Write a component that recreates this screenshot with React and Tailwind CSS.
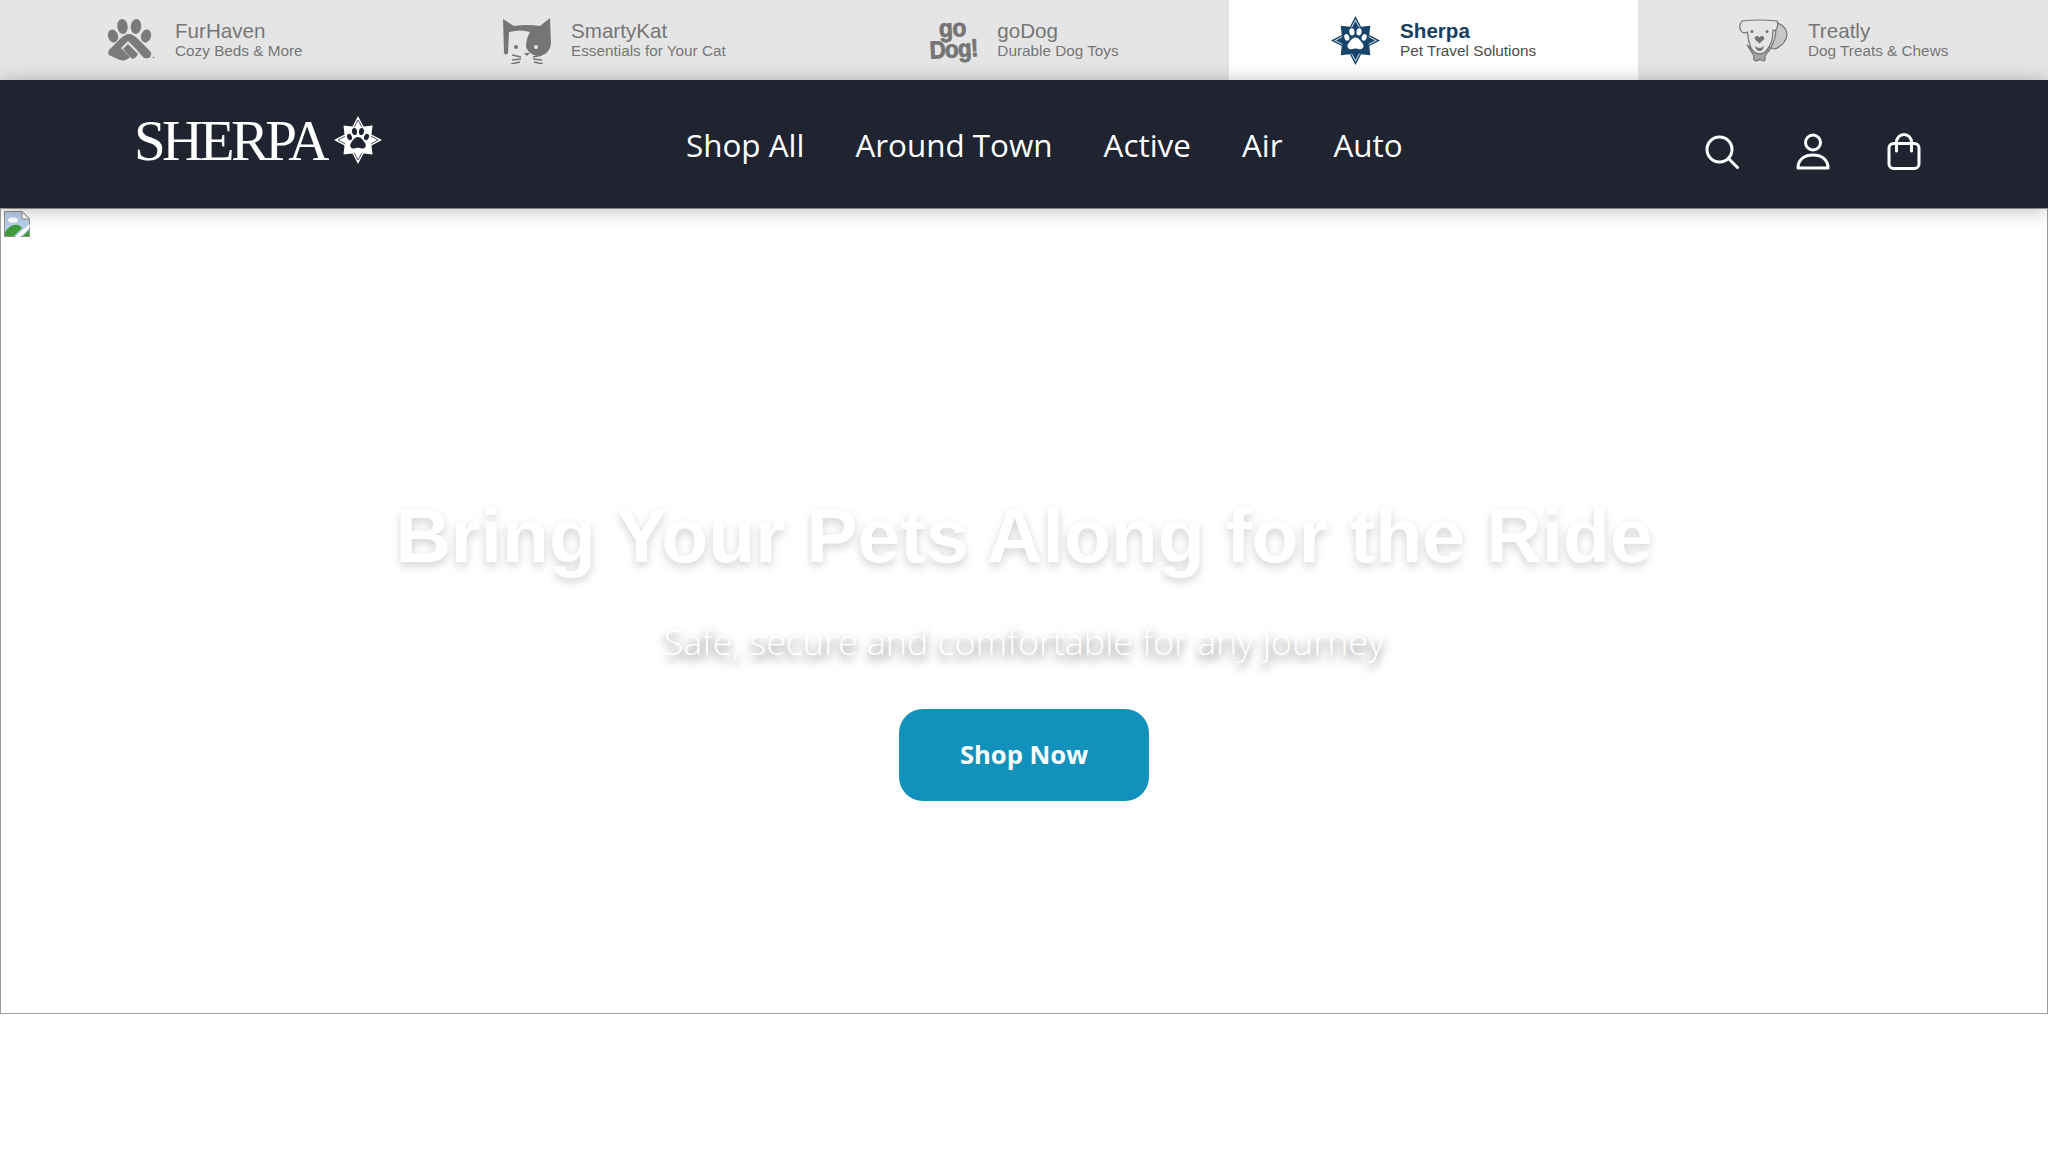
const brands = [
  { name: 'FurHaven', tagline: 'Cozy Beds & More', Icon: PawLogo },
  { name: 'SmartyKat', tagline: 'Essentials for Your Cat', Icon: CatLogo },
  { name: 'goDog', tagline: 'Durable Dog Toys', Icon: GoDogLogo },
  { name: 'Sherpa', tagline: 'Pet Travel Solutions', Icon: SherpaTabLogo, active: true },
  { name: 'Treatly', tagline: 'Dog Treats & Chews', Icon: DogLogo },
];

const links = ['Shop All', 'Around Town', 'Active', 'Air', 'Auto'];

function PawLogo() {
  return (
    <svg width="48" height="42" viewBox="0 0 48 42" className="text-[#7a7a7a]" fill="currentColor">
      <ellipse cx="6" cy="17" rx="5" ry="6.5" transform="rotate(-18 6 17)" />
      <ellipse cx="15.5" cy="7.5" rx="5.2" ry="7.5" transform="rotate(-6 15.5 7.5)" />
      <ellipse cx="29" cy="7.5" rx="5.2" ry="7.5" transform="rotate(6 29 7.5)" />
      <ellipse cx="39" cy="17" rx="5" ry="6.5" transform="rotate(18 39 17)" />
      <path d="M22 15 C19 15 16 17 13 20 L3 30 C0 33 1 36 4 37 L13 41 C17 42 20 41 23 38 L14 29 L21 22 L29 30 L36 38 C38 40 44 40 44 36 C45 34 43 32 41 30 L31 20 C28 17 25 15 22 15 Z" />
      <path d="M21 25 L31 35 C29 39 26 41 24 39 L16 30 Z" />
      <circle cx="46.5" cy="38.5" r="0.8" />
    </svg>
  );
}

function CatLogo() {
  return (
    <svg width="48" height="47" viewBox="0 0 48 47" className="text-[#757575]" fill="currentColor">
      <path d="M0 2 L11 9 Q24 7 37 9 L47 1 L48 26 Q47 38 35 39 Q26 38 23 30 Q23 22 27 15 Q18 12 6 15 L5 36 Q3 39 1 36 Z" />
      <circle cx="13" cy="30" r="2" />
      <circle cx="33" cy="30" r="2" className="text-[#e5e5e5]" fill="currentColor" />
      <path d="M21 36 L27 36 L24 39 Z" />
      <path d="M9 38 L18 40 M9 43 L18 42 M8 47 L17 45 M30 40 L39 38 M30 42 L39 43 M31 45 L40 47" stroke="currentColor" strokeWidth="1.5" fill="none" />
    </svg>
  );
}

function GoDogLogo() {
  return (
    <div className="flex w-[48px] -rotate-3 scale-y-110 flex-col items-center font-['Liberation_Sans',sans-serif] font-bold text-[#757575] [-webkit-text-stroke:0.7px_#757575]">
      <span className="text-[23px] leading-[15px] tracking-[-0.5px]">go</span>
      <span className="mt-[2px] text-[22.5px] leading-[20px] tracking-[-0.8px]">Dog!</span>
    </div>
  );
}

function SherpaStar({ size, color, paw }) {
  return (
    <svg width={size} height={size} viewBox="0 0 48 48">
      <path fill={color} d="M24 0 L29.5 10.5 L38.5 9.5 L37.5 18.5 L48 24 L37.5 29.5 L38.5 38.5 L29.5 37.5 L24 48 L18.5 37.5 L9.5 38.5 L10.5 29.5 L0 24 L10.5 18.5 L9.5 9.5 L18.5 10.5 Z" />
      <path fill="none" stroke={paw} strokeWidth="1" d="M24 4 L17 17 L4 24 L17 31 L24 44 L31 31 L44 24 L31 17 Z" opacity="0.75" />
      <circle cx="24" cy="24" r="13.5" fill={color} />
      <g fill={paw}>
        <ellipse cx="15.5" cy="21" rx="2.4" ry="3.3" transform="rotate(-20 15.5 21)" />
        <ellipse cx="20.5" cy="15.5" rx="2.5" ry="3.6" transform="rotate(-8 20.5 15.5)" />
        <ellipse cx="27.5" cy="15.5" rx="2.5" ry="3.6" transform="rotate(8 27.5 15.5)" />
        <ellipse cx="32.5" cy="21" rx="2.4" ry="3.3" transform="rotate(20 32.5 21)" />
        <path d="M24 21 C27 21 29 24 31 27 C33 30 31 33 28 32.5 C26 32 25 31.8 24 31.8 C23 31.8 22 32 20 32.5 C17 33 15 30 17 27 C19 24 21 21 24 21 Z" />
      </g>
    </svg>
  );
}

function SherpaTabLogo() {
  return <SherpaStar size={49} color="#17446b" paw="#ffffff" />;
}

function DogLogo() {
  return (
    <svg width="50" height="43" viewBox="0 0 50 43" fill="none" stroke="#737373" strokeWidth="1.2" strokeLinejoin="round">
      <path d="M40 4 Q49 8 49 16 Q48 25 37 30 L33 29 Q38 18 38 10 Z" fill="#a0a0a0" fillOpacity="0.45" />
      <path d="M4 2 Q20 0 39 2 Q41 8 37 12 L35 11 Q35 22 31 28 Q27 35 22 35 Q16 35 13 29 Q10 22 9.5 13 Q5 15 3 12 Q0 7 4 2 Z" fill="#e5e5e5" />
      <path d="M9 26 L13 29 Q16 35 22 35 Q27 35 31 28 L33 29 L27 37 L27 41 Q24 43 22 40 Q19 43 16 41 L15.5 36 Z" fill="#8a8a8a" fillOpacity="0.7" />
      <circle cx="14" cy="12.5" r="1.5" fill="#737373" stroke="none" />
      <circle cx="29" cy="12.5" r="1.5" fill="#737373" stroke="none" />
      <path d="M21.5 18.5 C20 15.5 15.5 17 17 20.5 L21.5 24.5 L26 20.5 C27.5 17 23 15.5 21.5 18.5 Z" fill="#737373" stroke="none" />
      <path d="M17 27 Q21.5 31 26 27 Q25 32 21.5 32 Q18 32 17 27 Z" fill="#737373" stroke="none" />
    </svg>
  );
}

function SearchIcon() {
  return (
    <svg width="34" height="34" viewBox="0 0 34 34" fill="none" stroke="white" strokeWidth="3" strokeLinecap="round">
      <circle cx="14.5" cy="14.5" r="12.5" />
      <path d="M23.5 23.5 L32.5 32.5" />
    </svg>
  );
}

function PersonIcon() {
  return (
    <svg width="34" height="37" viewBox="0 0 34 37" fill="none" stroke="white" strokeWidth="3" strokeLinejoin="round">
      <circle cx="17" cy="9.5" r="7.5" />
      <path d="M2 35 C2 26 9 22 17 22 C25 22 32 26 32 35 Z" />
    </svg>
  );
}

function BagIcon() {
  return (
    <svg width="34" height="37" viewBox="0 0 34 37" fill="none" stroke="white" strokeWidth="3" strokeLinecap="round">
      <rect x="2" y="10.5" width="30" height="25" rx="4.5" />
      <path d="M9.5 18 V9 A7.5 7.5 0 0 1 24.5 9 V18" />
    </svg>
  );
}

function BrokenImage() {
  return (
    <svg width="26" height="26" viewBox="0 0 26 26" className="absolute left-[3px] top-[2px]">
      <path d="M0.5 0.5 H18 L25.5 8 V25.5 H0.5 Z" fill="#b9cdea" stroke="#8e8e8e" />
      <path d="M18 0.5 V8 H25.5 Z" fill="#ffffff" stroke="#8e8e8e" />
      <ellipse cx="9" cy="9" rx="5" ry="2.6" fill="#ffffff" />
      <path d="M1 25 V21 Q7 12 14 14 Q17 15 18 17 L10 25 Z" fill="#3f9b3a" />
      <path d="M25.5 13 V17 L16 26 H11 Z" fill="#ffffff" />
      <path d="M25 19 V25 H19 Z" fill="#3f9b3a" />
    </svg>
  );
}

export default function App() {
  return (
    <div className="min-h-[1152px] bg-white">
      <div className="grid h-20 grid-cols-5 bg-[#e5e5e5] font-['Liberation_Sans',sans-serif]">
        {brands.map(({ name, tagline, Icon, active }) => (
          <div key={name} className={`flex items-center justify-center gap-[20px] ${active ? 'bg-white' : ''}`}>
            <Icon />
            <div className="mb-[2px]">
              <div className={`text-[20.6px] leading-[24px] ${active ? 'font-bold text-[#17405f]' : 'text-[#757575]'}`}>{name}</div>
              <div className={`text-[15.3px] leading-[16px] ${active ? 'text-[#4b4b4b]' : 'text-[#757575]'}`}>{tagline}</div>
            </div>
          </div>
        ))}
      </div>

      <header className="relative z-10 flex h-[128px] items-center bg-[#1f2430] pl-[134px] pr-[127px] shadow-[0_2px_18px_rgba(0,0,0,0.28)]">
        <div className="flex w-[248px] items-center">
          <span className="mt-[-8px] font-['Liberation_Serif',serif] text-[57px] leading-none tracking-[-3.6px] text-white">SHERPA</span>
          <span className="ml-[8px] mt-[-8px]">
            <SherpaStar size={48} color="#ffffff" paw="#1f2430" />
          </span>
        </div>
        <nav className="ml-[304px] mt-[1px] flex gap-[51px] font-['Open_Sans',sans-serif] text-[31.4px] text-white">
          {links.map((link) => (
            <a key={link} href="#" className="leading-[40px]">{link}</a>
          ))}
        </nav>
        <div className="ml-auto mt-[15px] flex items-center gap-[57px]">
          <SearchIcon />
          <PersonIcon />
          <BagIcon />
        </div>
      </header>

      <section className="relative flex h-[806px] flex-col items-center border border-[#9e9e9e] bg-white pt-[283px]">
        <BrokenImage />
        <h1 className="font-['Liberation_Sans',sans-serif] text-[76.8px] font-bold leading-[86px] text-white [text-shadow:0_4px_10px_rgba(0,0,0,0.18)]">
          Bring Your Pets Along for the Ride
        </h1>
        <p className="mt-[39px] font-['Open_Sans',sans-serif] text-[35.8px] font-light leading-[48px] text-white [text-shadow:0_5px_10px_rgba(0,0,0,0.6)]">
          Safe, secure and comfortable for any journey
        </p>
        <a href="#" className="mt-[44px] flex h-[92px] w-[250px] items-center justify-center rounded-[24px] bg-[#1191bb] font-['Open_Sans',sans-serif] text-[25.6px] font-bold text-white">
          Shop Now
        </a>
      </section>
    </div>
  );
}
